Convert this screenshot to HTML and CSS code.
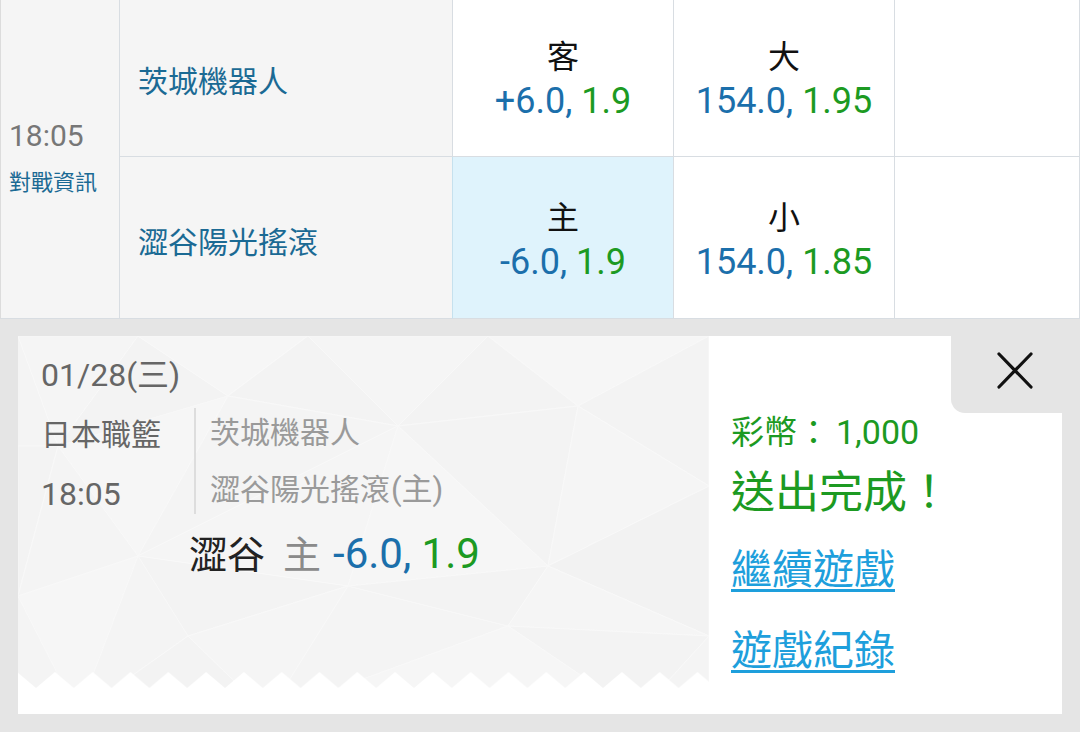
FILE: index.html
```html
<!DOCTYPE html>
<html lang="zh-Hant">
<head>
<meta charset="utf-8">
<title>送出完成</title>
<link rel="stylesheet" href="styles.css">
</head>
<body>
<div class="page">
  <div class="odds">
    <div class="cell time-cell">
      <div class="time">18:05</div>
      <div class="info-link">對戰資訊</div>
    </div>
    <div class="cell team">茨城機器人</div>
    <div class="cell bet">
      <div class="label">客</div>
      <div class="val"><span class="blue">+6.0,</span> <span class="green">1.9</span></div>
    </div>
    <div class="cell bet">
      <div class="label">大</div>
      <div class="val"><span class="blue">154.0,</span> <span class="green">1.95</span></div>
    </div>
    <div class="cell empty"></div>
    <div class="cell team row2">澀谷陽光搖滾</div>
    <div class="cell bet row2 selected">
      <div class="label">主</div>
      <div class="val"><span class="blue">-6.0,</span> <span class="green">1.9</span></div>
    </div>
    <div class="cell bet row2">
      <div class="label">小</div>
      <div class="val"><span class="blue">154.0,</span> <span class="green">1.85</span></div>
    </div>
    <div class="cell empty row2"></div>
  </div>

  <div class="sheet">
    <div class="card">
      <div class="ticket">
        <svg class="poly" width="691" height="378" viewBox="0 0 691 378" aria-hidden="true">
          <rect width="691" height="378" fill="#f4f4f4"/>
          <g stroke="#f8f8f8" stroke-width="1">
            <polygon points="0,0 120,0 40,110" fill="#f5f5f5"/>
            <polygon points="120,0 40,110 210,60" fill="#f3f3f3"/>
            <polygon points="120,0 290,0 210,60" fill="#f6f6f6"/>
            <polygon points="290,0 210,60 380,90" fill="#f3f3f3"/>
            <polygon points="290,0 470,0 380,90" fill="#f5f5f5"/>
            <polygon points="470,0 380,90 560,70" fill="#f3f3f3"/>
            <polygon points="470,0 691,0 560,70" fill="#f6f6f6"/>
            <polygon points="691,0 560,70 691,150" fill="#f3f3f3"/>
            <polygon points="0,110 40,110 0,260" fill="#f3f3f3"/>
            <polygon points="40,110 210,60 120,220" fill="#f6f6f6"/>
            <polygon points="210,60 380,90 120,220" fill="#f4f4f4"/>
            <polygon points="380,90 120,220 330,250" fill="#f5f5f5"/>
            <polygon points="380,90 560,70 530,230" fill="#f3f3f3"/>
            <polygon points="560,70 691,150 530,230" fill="#f5f5f5"/>
            <polygon points="691,150 530,230 691,300" fill="#f2f2f2"/>
            <polygon points="380,90 530,230 330,250" fill="#f6f6f6"/>
            <polygon points="0,260 40,110 120,220" fill="#f4f4f4"/>
            <polygon points="0,260 120,220 60,378" fill="#f6f6f6"/>
            <polygon points="120,220 330,250 170,300" fill="#f3f3f3"/>
            <polygon points="120,220 170,300 60,378" fill="#f4f4f4"/>
            <polygon points="170,300 60,378 250,378" fill="#f3f3f3"/>
            <polygon points="330,250 170,300 250,378" fill="#f5f5f5"/>
            <polygon points="330,250 490,290 250,378" fill="#f4f4f4"/>
            <polygon points="330,250 530,230 490,290" fill="#f3f3f3"/>
            <polygon points="530,230 691,300 490,290" fill="#f5f5f5"/>
            <polygon points="490,290 691,300 620,378" fill="#f3f3f3"/>
            <polygon points="490,290 620,378 250,378" fill="#f6f6f6"/>
            <polygon points="691,300 620,378 691,378" fill="#f4f4f4"/>
          </g>
        </svg>
        <div class="ticket-body">
          <div class="date">01/28(三)</div>
          <div class="info">
            <div class="meta">
              <div>日本職籃</div>
              <div class="num">18:05</div>
            </div>
            <div class="teams">
              <div>茨城機器人</div>
              <div>澀谷陽光搖滾<span class="paren">(主)</span></div>
            </div>
          </div>
          <div class="pick"><span class="pick-team">澀谷</span><span class="pick-side">主</span><span class="pick-odds"><span class="blue">-6.0,</span> <span class="green">1.9</span></span></div>
        </div>
        <svg class="zigzag" width="691" height="42" viewBox="0 0 691 42" aria-hidden="true">
          <defs>
            <pattern id="zz" x="18" y="0" width="37.8" height="16" patternUnits="userSpaceOnUse">
              <polygon points="0,16 18.9,0 37.8,16" fill="#ffffff"/>
            </pattern>
          </defs>
          <rect x="0" y="0" width="691" height="16" fill="url(#zz)"/>
          <rect x="0" y="16" width="691" height="26" fill="#ffffff"/>
        </svg>
      </div>
      <div class="result">
        <div class="result-head">
          <div class="close-tab">
            <svg class="close-x" width="36" height="37" viewBox="0 0 36 37" aria-hidden="true">
              <path d="M2 2 L34 35 M34 2 L2 35" stroke="#111" stroke-width="3.2" stroke-linecap="round" fill="none"/>
            </svg>
          </div>
        </div>
        <div class="coins">彩幣：<span class="coin-num">1,000</span></div>
        <div class="done">送出完成！</div>
        <a class="link link-first" href="#">繼續遊戲</a>
        <a class="link link-second" href="#">遊戲紀錄</a>
      </div>
    </div>
  </div>
</div>
</body>
</html>
```

FILE: styles.css
```css
* { box-sizing: border-box; }

html, body {
  margin: 0;
  padding: 0;
}

body {
  width: 1080px;
  height: 732px;
  overflow: hidden;
  background: #e5e5e5;
  font-family: Roboto, "Noto Sans CJK TC", sans-serif;
}

.page {
  display: flex;
  flex-direction: column;
}

.blue { color: #1b6fab; }
.green { color: #1c9a22; }

/* ---------- odds table ---------- */
.odds {
  display: grid;
  grid-template-columns: 120px 333px 221px 221px 185px;
  grid-template-rows: 157px 162px;
  background: #ffffff;
}

.cell {
  border-right: 1px solid #d8dde2;
  border-bottom: 1px solid #d8dde2;
}

.time-cell {
  grid-row: 1 / span 2;
  background: #f5f5f5;
  border-left: 1px solid #dcdcdc;
  display: flex;
  flex-direction: column;
  justify-content: center;
  padding-left: 8px;
  padding-bottom: 4px;
}

.time {
  font-size: 30px;
  line-height: 40px;
  color: #777777;
}

.info-link {
  font-size: 22px;
  line-height: 30px;
  color: #1b6a94;
  margin-top: 12px;
}

.team {
  background: #f5f5f5;
  display: flex;
  align-items: center;
  padding-left: 18px;
  font-size: 30px;
  color: #1b6a94;
  padding-top: 2px;
}

.team.row2 {
  padding-top: 4px;
}

.bet {
  background: #ffffff;
  display: flex;
  flex-direction: column;
  align-items: center;
  justify-content: center;
  padding-top: 3px;
}

.bet.row2 {
  padding-top: 6px;
}

.bet.selected {
  background: #dff3fc;
  border-left: 1px solid #c6e1ee;
  margin-left: -1px;
}

.label {
  font-size: 32px;
  line-height: 42px;
  color: #111111;
}

.val {
  font-size: 36px;
  line-height: 46px;
  white-space: nowrap;
}

.empty { background: #ffffff; }

/* ---------- sheet / card ---------- */
.sheet {
  padding: 17px 18px 0 18px;
}

.card {
  display: flex;
  height: 378px;
  width: 1044px;
}

.ticket {
  position: relative;
  width: 691px;
  display: flex;
  flex-direction: column;
  overflow: hidden;
}

.poly {
  position: absolute;
  left: 0;
  top: 0;
}

.ticket-body {
  position: relative;
  padding: 19px 0 0 23px;
  flex: 1;
}

.date {
  font-size: 32px;
  line-height: 40px;
  color: #666666;
}

.info {
  display: flex;
  margin-top: 13px;
}

.meta {
  width: 153px;
  display: flex;
  flex-direction: column;
  gap: 19px;
  padding-top: 7px;
  font-size: 30px;
  line-height: 40px;
  color: #666666;
}

.meta .num {
  font-size: 32px;
}

.teams {
  border-left: 2px solid #dddddd;
  padding-left: 14px;
  padding-top: 5px;
  display: flex;
  flex-direction: column;
  gap: 17px;
  font-size: 30px;
  line-height: 40px;
  color: #9a9a9a;
}

.paren {
  font-size: 31px;
  margin-left: 1px;
}

.pick {
  margin-top: 15px;
  margin-left: 148px;
  font-size: 38px;
  line-height: 50px;
  white-space: nowrap;
  display: flex;
  align-items: baseline;
}

.pick-team { color: #222222; }
.pick-side { color: #8a8a8a; margin-left: 18px; }
.pick-odds { font-size: 42px; margin-left: 12px; }

.zigzag {
  position: relative;
  display: block;
  flex: none;
}

/* ---------- result panel ---------- */
.result {
  width: 353px;
  background: #ffffff;
  display: flex;
  flex-direction: column;
  padding-left: 22px;
}

.result-head {
  display: flex;
  justify-content: flex-end;
  height: 77px;
}

.close-tab {
  width: 111px;
  height: 77px;
  background: #e5e5e5;
  border-bottom-left-radius: 14px;
  padding: 16px 0 0 46px;
}

.close-x { display: block; }

.coins {
  margin-top: -1px;
  font-size: 33px;
  line-height: 40px;
  color: #1c9a22;
  white-space: nowrap;
}

.coin-num {
  font-size: 34px;
  margin-left: 6px;
}

.done {
  margin-top: 12px;
  font-size: 44px;
  line-height: 56px;
  color: #1c9a22;
}

.link {
  align-self: flex-start;
  font-size: 41px;
  line-height: 52px;
  color: #1e9fdc;
  text-decoration: underline;
  text-decoration-thickness: 3px;
  text-underline-offset: 5px;
}

.link-first { margin-top: 23px; }
.link-second { margin-top: 29px; }
```
